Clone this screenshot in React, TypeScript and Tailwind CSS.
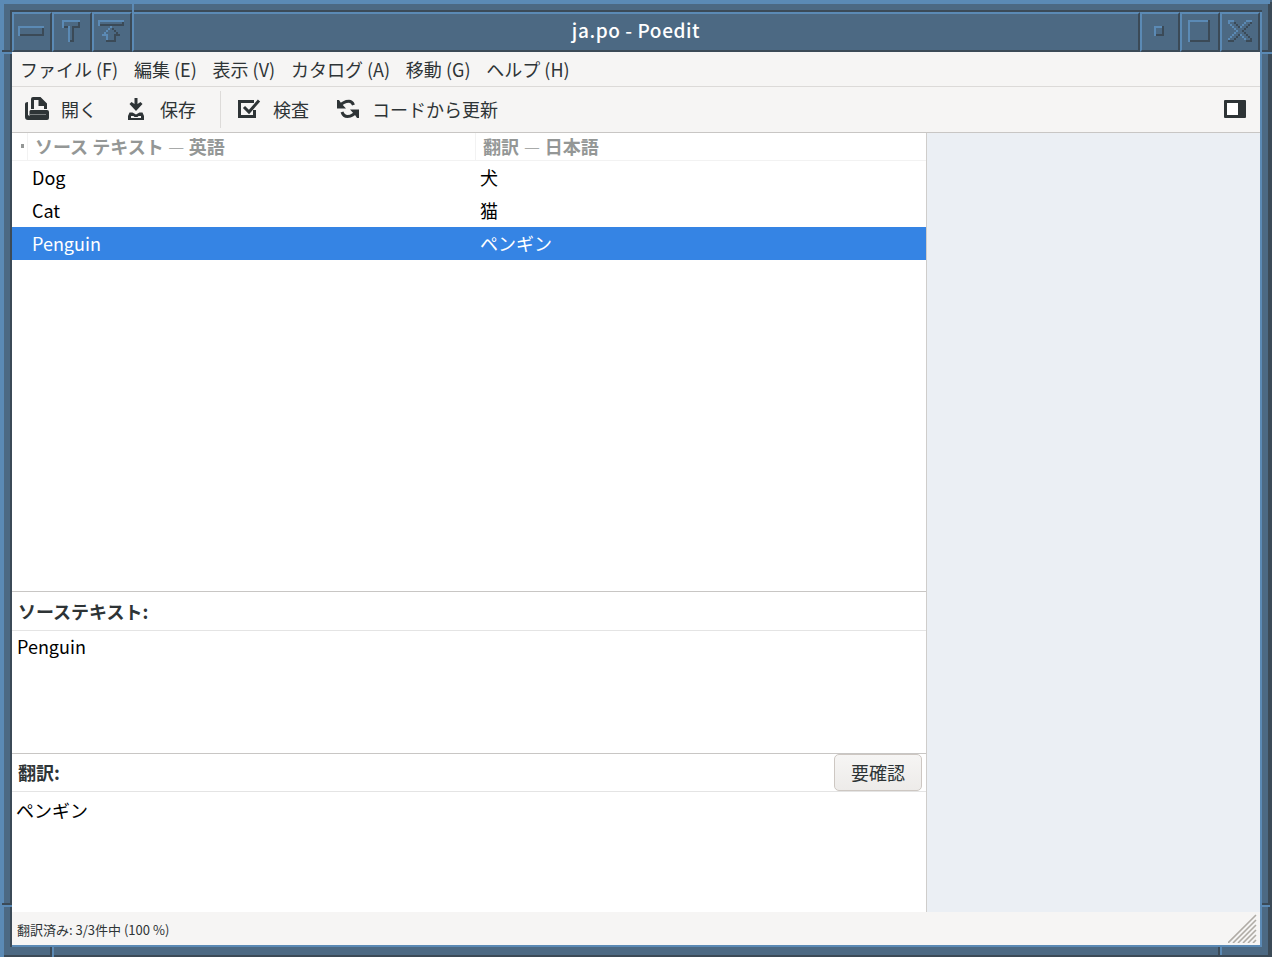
import type { ReactNode } from 'react'

const entries = [
  { source: 'Dog', translation: '犬' },
  { source: 'Cat', translation: '猫' },
  { source: 'Penguin', translation: 'ペンギン' },
]

const menus = ['ファイル (F)', '編集 (E)', '表示 (V)', 'カタログ (A)', '移動 (G)', 'ヘルプ (H)']

const LIGHT = '#5b8ab5'
const DARK = '#3b4a57'

// L = lit edge, D = shaded edge, every cell is 2px
const arrowCells = [
  '....L....',
  '...L.D...',
  '..L...D..',
  '.L.....D.',
  'LLL...DDD',
  '..L...D..',
  '..L...D..',
  '..DDDDD..',
]

const closeCells = [
  'LLL......LLL',
  'L..D....L..D',
  '.L..D..L..D.',
  '..L..DL..D..',
  '...L....D...',
  '....L..D....',
  '...L....D...',
  '..L..DL..D..',
  '.L..D..L..D.',
  'L..D....L..D',
  'DDD......DDD',
]

const Cells = ({ rows, x, y }: { rows: string[]; x: number; y: number }) => (
  <>
    {rows.flatMap((row, r) =>
      row.split('').map((cell, c) =>
        cell === '.' ? null : (
          <rect key={`${r}-${c}`} x={x + c * 2} y={y + r * 2} width="2" height="2" fill={cell === 'L' ? LIGHT : DARK} />
        )
      )
    )}
  </>
)

const TitleButton = ({ children }: { children: ReactNode }) => (
  <div className="w-10 h-10 shrink-0 border-2 border-t-[#5b8ab5] border-l-[#5b8ab5] border-b-[#3b4a57] border-r-[#3b4a57]">
    <svg width="36" height="36" viewBox="2 2 36 36" shapeRendering="crispEdges">
      {children}
    </svg>
  </div>
)

// Bevelled window border with the resize notches near each corner
const Frame = () => (
  <svg className="absolute inset-0 pointer-events-none" width="1272" height="957" shapeRendering="crispEdges">
    <path fill={DARK} d="M1268 4h4v953h-4zM1270 2h2v2h-2zM4 955h1268v2H4zM10 10h1252v2H10zM10 12h2v935h-2z" />
    <path fill={LIGHT} d="M0 0h1270v4H0zM0 0h4v957H0zM1260 12h2v935h-2zM12 945h1250v2H12z" />
    <path fill={DARK} d="M2 50h10v2H2zM1262 50h8v2h-8zM2 903h10v2H2zM1262 903h8v2h-8zM50 947h2v8h-2zM1218 947h2v8h-2z" />
    <path fill={LIGHT} d="M2 52h10v2H2zM1262 52h10v2h-10zM2 905h10v2H2zM1262 905h8v2h-8zM52 947h2v10h-2zM1220 947h2v8h-2zM132 4h2v8h-2z" />
  </svg>
)

const TitleBar = () => (
  <div className="flex h-10">
    <TitleButton>
      <path fill={DARK} d="M6 22h26v2H6zM30 16h2v8h-2z" />
      <path fill={LIGHT} d="M6 14h26v2H6zM6 14h2v10H6z" />
    </TitleButton>
    <TitleButton>
      <path fill={DARK} d="M26 8h2v8h-2zM22 14h6v2h-6zM20 14h2v16h-2zM16 28h6v2h-6zM10 14h6v2h-6z" />
      <path fill={LIGHT} d="M10 8h18v2H10zM10 8h2v8h-2zM16 14h2v16h-2z" />
    </TitleButton>
    <TitleButton>
      <path fill={DARK} d="M6 12h26v2H6zM30 8h2v6h-2z" />
      <path fill={LIGHT} d="M6 8h26v2H6zM6 8h2v6H6z" />
      <Cells rows={arrowCells} x={10} y={14} />
    </TitleButton>
    <div className="flex-1 flex items-center justify-center border-2 border-t-[#5b8ab5] border-l-[#5b8ab5] border-b-[#3b4a57] border-r-[#3b4a57] pb-[5px] text-white text-[19px] font-medium tracking-[0.57px] leading-none">
      ja.po - Poedit
    </div>
    <TitleButton>
      <path fill={DARK} d="M14 22h10v2H14zM22 14h2v10h-2z" />
      <path fill={LIGHT} d="M14 14h8v2h-8zM14 14h2v10h-2z" />
    </TitleButton>
    <TitleButton>
      <path fill={DARK} d="M8 28h22v2H8zM28 8h2v22h-2z" />
      <path fill={LIGHT} d="M8 8h20v2H8zM8 8h2v22H8z" />
    </TitleButton>
    <TitleButton>
      <Cells rows={closeCells} x={8} y={8} />
    </TitleButton>
  </div>
)

const OpenIcon = () => (
  <svg width="24" height="24" viewBox="0 0 24 24" fill="#2e3436">
    <path d="M0 7q0-2 3-2v13l3 2v3H3q-3 0-3-3z" />
    <path fillRule="evenodd" d="M6 12V2q0-2 2-2h7.500L22 6.500V12h-3V9h-5.500V3H9v9z" />
    <path d="M5.500 13H22q2 0 2 2v6q0 2-2 2H3l1.500-3v-6z" />
    <path fill="#7b7f80" d="M5 17h16v1H5z" />
  </svg>
)

const SaveIcon = () => (
  <svg width="16" height="22" viewBox="0 0 16 22" fill="#2e3436">
    <path d="M6.500 0h3v6l3-2 2 2L8 13 1.500 6l2-2 3 2z" />
    <path fillRule="evenodd" d="M1.500 14.500h3L8 16.500l3.500-2h3L16 18v4H0v-4zM3 18v2h10v-2h-2.500l-1 1h-3l-1-1z" />
  </svg>
)

const CheckIcon = () => (
  <svg width="24" height="22" viewBox="0 0 24 22" fill="none" stroke="#2e3436" strokeWidth="3">
    <path d="M17 3.500H2.500v15h15V12" />
    <path d="M7 9l5 5L22 2.500" />
  </svg>
)

const SyncIcon = () => (
  <svg width="22" height="20" viewBox="0 0 22 20" fill="none" stroke="#2e3436" strokeWidth="3">
    <path d="M3.500 5.500L7 3.500Q9 2.300 12 2.300q3 0 4.500 3.700M5 13Q6.500 17.500 10.500 17.500q3 0 5-1.500l3-2" />
    <path fill="#2e3436" stroke="none" d="M0 1h2l2 3 5 5.500H0zM22 19h-2l-2-3-5-5.500h9z" />
  </svg>
)

const Toolbar = () => (
  <div className="flex items-center h-[47px] border-t border-[#dcdad8] border-b border-b-[#c8c6c4] pl-[13px] pr-3.5 text-[#2e3436] [&>svg]:mb-0.5">
    <OpenIcon />
    <span className="ml-3 w-[67px]">開く</span>
    <SaveIcon />
    <span className="ml-4 w-[60px]">保存</span>
    <div className="w-px h-[37px] bg-[#dddbd9] mr-4" />
    <CheckIcon />
    <span className="ml-3 w-16">検査</span>
    <SyncIcon />
    <span className="ml-[13px]">コードから更新</span>
    <svg className="ml-auto" width="22" height="18" viewBox="0 0 22 18">
      <rect width="22" height="18" rx="1" fill="#2e3436" />
      <rect x="3" y="3" width="11" height="12" fill="#fff" />
    </svg>
  </div>
)

const EntryList = () => (
  <div className="flex-1 bg-white text-black">
    <div className="flex h-7 border-b border-[#f2f2f2] font-bold text-[#949796] leading-[26px]">
      <div className="w-4 flex items-center justify-end border-r border-[#f2f2f2] pr-[3px]">
        <div className="w-[3px] h-1 mb-px bg-[#949796]" />
      </div>
      <div className="w-[448px] pl-[7px] border-r border-[#f2f2f2]">
        ソース テキスト <span className="font-light mx-[0.5px]">—</span> 英語
      </div>
      <div className="pl-[7px]">
        翻訳 <span className="font-light mx-[0.8px]">—</span> 日本語
      </div>
    </div>
    {entries.map((entry, i) => (
      <div
        key={entry.source}
        className={`flex h-[33px] pl-5 leading-[33px] ${i === 2 ? 'bg-[#3584e4] text-white' : ''}`}
      >
        <div className="w-[448px]">{entry.source}</div>
        <div>{entry.translation}</div>
      </div>
    ))}
  </div>
)

export default function App() {
  return (
    <div className="relative w-[1272px] h-[957px] bg-[#4c6983] p-3 overflow-hidden text-[18px] font-['Noto_Sans_CJK_JP',sans-serif]">
      <TitleBar />
      <div className="flex flex-col w-[1248px] h-[893px] bg-[#f6f5f4]">
        <div className="flex items-center h-[34px] gap-[15.8px] pl-2 pt-px text-[#2e3436]">
          {menus.map((menu) => (
            <span key={menu}>{menu}</span>
          ))}
        </div>
        <Toolbar />
        <div className="flex flex-1">
          <div className="flex flex-col w-[915px] bg-white border-r border-[#cfcdcb]">
            <EntryList />

            {/* Source text */}
            <div className="h-[162px] border-t border-[#c8c6c4]">
              <div className="h-[39px] border-b border-[#e4e4e4] pl-1.5 leading-[38px] font-bold text-[#2e3436]">
                ソーステキスト:
              </div>
              <div className="pl-[5px] leading-[30px] text-black">Penguin</div>
            </div>

            {/* Translation */}
            <div className="h-[159px] border-t border-[#c8c6c4]">
              <div className="flex items-center justify-between h-[38px] border-b border-[#e4e4e4] pl-1.5 pr-1 text-[#2e3436]">
                <span className="font-bold">翻訳:</span>
                <button className="w-[88px] h-[37px] rounded-[5px] border border-[#cdc7c2] bg-linear-to-b from-[#f6f5f4] to-[#edebe9]">
                  要確認
                </button>
              </div>
              <div className="pl-1 pt-[3px] leading-[30px] text-black">ペンギン</div>
            </div>
          </div>
          <div className="flex-1 bg-[#ebeff4]" />
        </div>
        <div className="flex items-center justify-between h-[33px] pl-[5px] pr-[3px] text-[13px] text-[#2e3436]">
          <span className="pt-0.5">翻訳済み: 3/3件中 (100 %)</span>
          <svg width="29" height="29" viewBox="0 0 29 29" stroke="#b0aca6" strokeWidth="1.600">
            <path d="M0 29L28 1M5 29L28 6M10 29l18-18M15 29l13-13M20 29l8-8M25 29l3-3" />
          </svg>
        </div>
      </div>
      <Frame />
    </div>
  )
}
